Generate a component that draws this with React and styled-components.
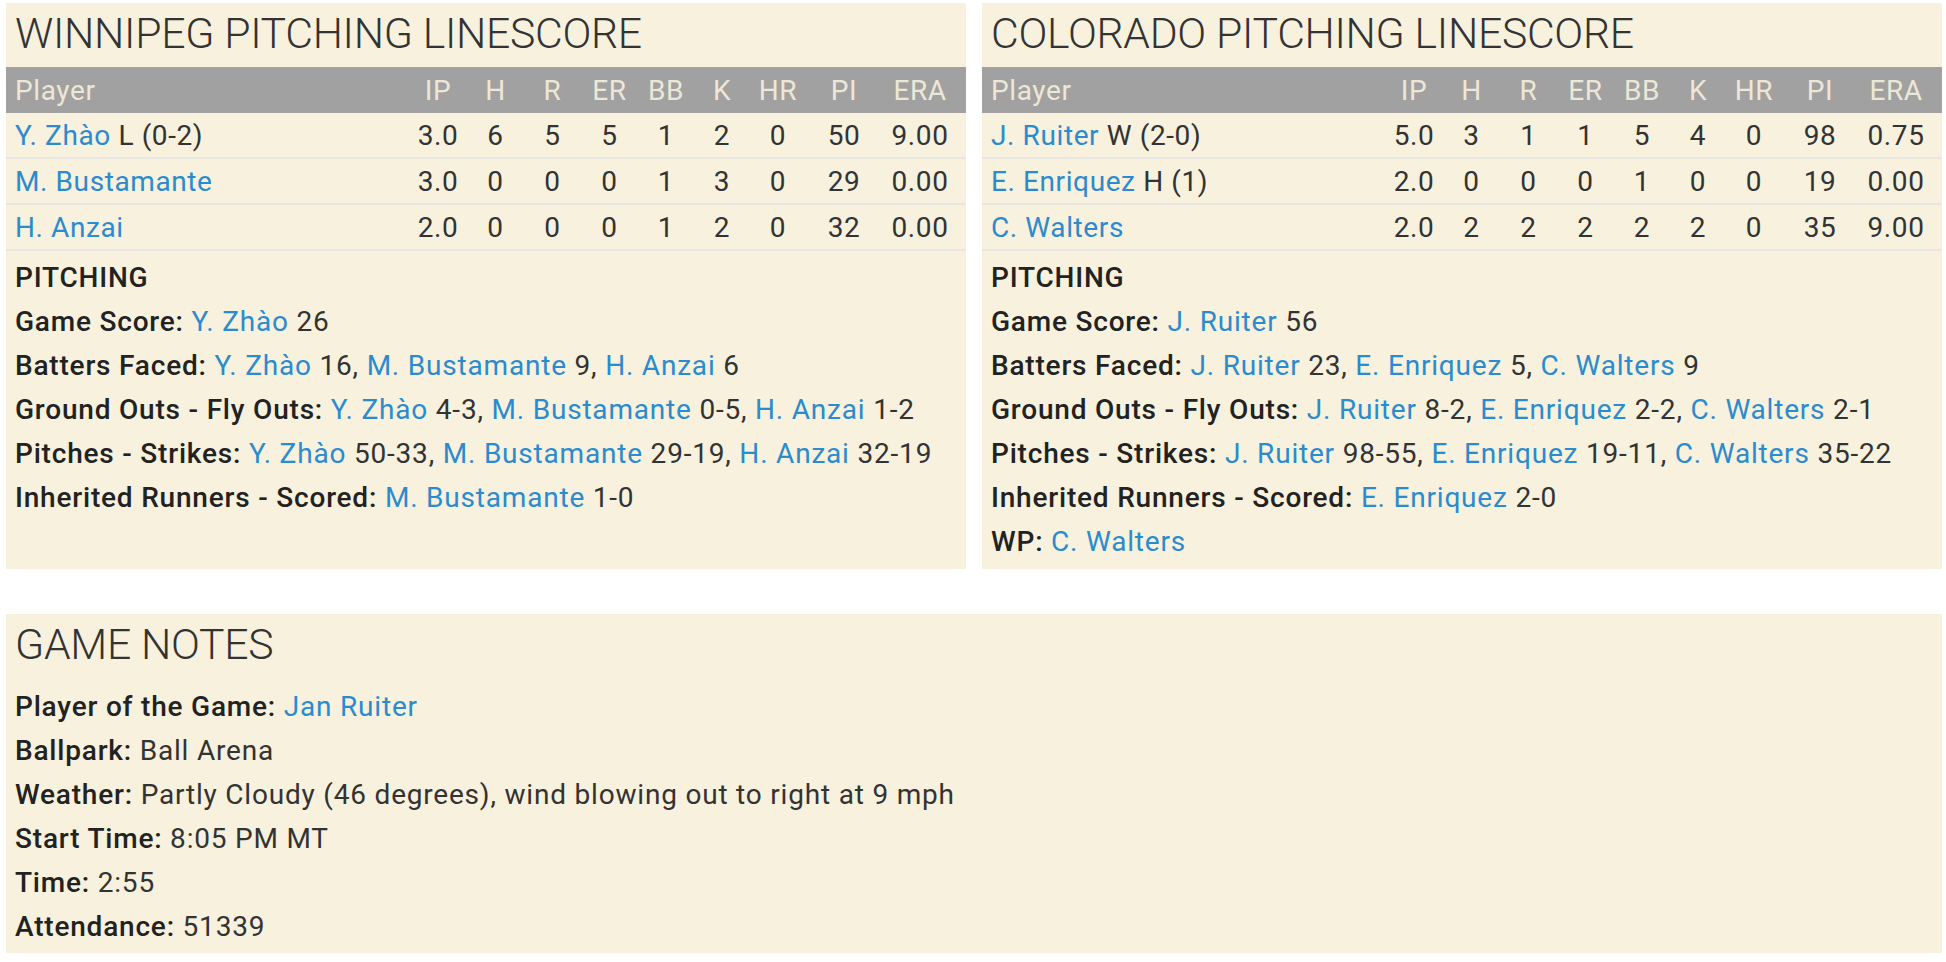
import React from 'react'
import styled, { createGlobalStyle } from 'styled-components'

const GlobalStyle = createGlobalStyle`
  body {
    margin: 0;
    background: #ffffff;
    font-family: Roboto, "Liberation Sans", sans-serif;
    color: #333333;
  }
`

const Page = styled.div`
  display: flex;
  flex-direction: column;
  gap: 45px;
  padding: 3px 4px 0 6px;
`

const PanelRow = styled.div`
  display: grid;
  grid-template-columns: 960px 960px;
  gap: 16px;
`

const Panel = styled.section`
  background: #f7f1de;
  display: flex;
  flex-direction: column;
`

const PanelTitle = styled.h2`
  margin: 0;
  padding: 0 9px 4px;
  height: 60px;
  line-height: 60px;
  font-size: 42.7px;
  font-weight: 300;
  color: #333333;
  letter-spacing: -0.3px;
`

const Table = styled.table`
  width: 100%;
  border-collapse: collapse;
  table-layout: fixed;
  font-size: 28px;
  letter-spacing: 0.6px;
`

const HeadCell = styled.th`
  height: 46px;
  padding: 0;
  padding-left: ${p => (p.$left ? '9px' : '0')};
  padding-right: ${p => (p.$last ? '8px' : '0')};
  background: #a1a1a1;
  color: #ede8d6;
  font-weight: 400;
  text-align: ${p => (p.$left ? 'left' : 'center')};
`

const Cell = styled.td`
  height: 44px;
  padding: 0;
  padding-left: ${p => (p.$left ? '9px' : '0')};
  padding-right: ${p => (p.$last ? '8px' : '0')};
  border-bottom: 2px solid #e8e6e0;
  text-align: ${p => (p.$left ? 'left' : 'center')};
  white-space: nowrap;
  color: #333333;
`

const Link = styled.a`
  color: #2a8bcf;
  text-decoration: none;
`

const Notes = styled.div`
  padding: ${p => p.$pad || '5px 9px 5px'};
  font-size: 28px;
  letter-spacing: 0.8px;
`

const NoteLine = styled.div`
  height: 44px;
  line-height: 44px;
  white-space: nowrap;
`

const Label = styled.span`
  font-weight: 500;
  color: #222222;
`

const cols = [
  ['IP', 58],
  ['H', 57],
  ['R', 57],
  ['ER', 57],
  ['BB', 56],
  ['K', 56],
  ['HR', 56],
  ['PI', 76],
  ['ERA', 84],
]

const winnipeg = [
  { name: 'Y. Zhào', note: 'L (0-2)', stats: ['3.0', 6, 5, 5, 1, 2, 0, 50, '9.00'] },
  { name: 'M. Bustamante', stats: ['3.0', 0, 0, 0, 1, 3, 0, 29, '0.00'] },
  { name: 'H. Anzai', stats: ['2.0', 0, 0, 0, 1, 2, 0, 32, '0.00'] },
]

const colorado = [
  { name: 'J. Ruiter', note: 'W (2-0)', stats: ['5.0', 3, 1, 1, 5, 4, 0, 98, '0.75'] },
  { name: 'E. Enriquez', note: 'H (1)', stats: ['2.0', 0, 0, 0, 1, 0, 0, 19, '0.00'] },
  { name: 'C. Walters', stats: ['2.0', 2, 2, 2, 2, 2, 0, 35, '9.00'] },
]

// each entry: [player, value]
const winnipegNotes = [
  ['Game Score', [['Y. Zhào', '26']]],
  ['Batters Faced', [['Y. Zhào', '16'], ['M. Bustamante', '9'], ['H. Anzai', '6']]],
  ['Ground Outs - Fly Outs', [['Y. Zhào', '4-3'], ['M. Bustamante', '0-5'], ['H. Anzai', '1-2']]],
  ['Pitches - Strikes', [['Y. Zhào', '50-33'], ['M. Bustamante', '29-19'], ['H. Anzai', '32-19']]],
  ['Inherited Runners - Scored', [['M. Bustamante', '1-0']]],
]

const coloradoNotes = [
  ['Game Score', [['J. Ruiter', '56']]],
  ['Batters Faced', [['J. Ruiter', '23'], ['E. Enriquez', '5'], ['C. Walters', '9']]],
  ['Ground Outs - Fly Outs', [['J. Ruiter', '8-2'], ['E. Enriquez', '2-2'], ['C. Walters', '2-1']]],
  ['Pitches - Strikes', [['J. Ruiter', '98-55'], ['E. Enriquez', '19-11'], ['C. Walters', '35-22']]],
  ['Inherited Runners - Scored', [['E. Enriquez', '2-0']]],
  ['WP', [['C. Walters', '']]],
]

function StatLine({ label, items }) {
  return (
    <NoteLine>
      <Label>{label}:</Label>{' '}
      {items.map(([who, val], i) => (
        <React.Fragment key={who}>
          <Link href="#">{who}</Link>
          {val ? ' ' + val : ''}
          {i < items.length - 1 ? ', ' : ''}
        </React.Fragment>
      ))}
    </NoteLine>
  )
}

function PitchingPanel({ team, rows, notes }) {
  return (
    <Panel>
      <PanelTitle>{team} PITCHING LINESCORE</PanelTitle>
      <Table>
        <colgroup>
          <col />
          {cols.map(([c, w]) => (
            <col key={c} style={{ width: w }} />
          ))}
        </colgroup>
        <thead>
          <tr>
            <HeadCell $left>Player</HeadCell>
            {cols.map(([c], i) => (
              <HeadCell key={c} $last={i === cols.length - 1}>
                {c}
              </HeadCell>
            ))}
          </tr>
        </thead>
        <tbody>
          {rows.map(r => (
            <tr key={r.name}>
              <Cell $left>
                <Link href="#">{r.name}</Link>
                {r.note ? ' ' + r.note : ''}
              </Cell>
              {r.stats.map((s, i) => (
                <Cell key={i} $last={i === r.stats.length - 1}>
                  {s}
                </Cell>
              ))}
            </tr>
          ))}
        </tbody>
      </Table>
      <Notes>
        <NoteLine>
          <Label>PITCHING</Label>
        </NoteLine>
        {notes.map(([label, items]) => (
          <StatLine key={label} label={label} items={items} />
        ))}
      </Notes>
    </Panel>
  )
}

export default function App() {
  return (
    <>
      <GlobalStyle />
      <Page>
        <PanelRow>
          <PitchingPanel team="WINNIPEG" rows={winnipeg} notes={winnipegNotes} />
          <PitchingPanel team="COLORADO" rows={colorado} notes={coloradoNotes} />
        </PanelRow>
        <Panel>
          <PanelTitle>GAME NOTES</PanelTitle>
          <Notes $pad="7px 9px 4px">
            <NoteLine>
              <Label>Player of the Game:</Label> <Link href="#">Jan Ruiter</Link>
            </NoteLine>
            <NoteLine>
              <Label>Ballpark:</Label> Ball Arena
            </NoteLine>
            <NoteLine>
              <Label>Weather:</Label> Partly Cloudy (46 degrees), wind blowing out to right at 9 mph
            </NoteLine>
            <NoteLine>
              <Label>Start Time:</Label> 8:05 PM MT
            </NoteLine>
            <NoteLine>
              <Label>Time:</Label> 2:55
            </NoteLine>
            <NoteLine>
              <Label>Attendance:</Label> 51339
            </NoteLine>
          </Notes>
        </Panel>
      </Page>
    </>
  )
}
